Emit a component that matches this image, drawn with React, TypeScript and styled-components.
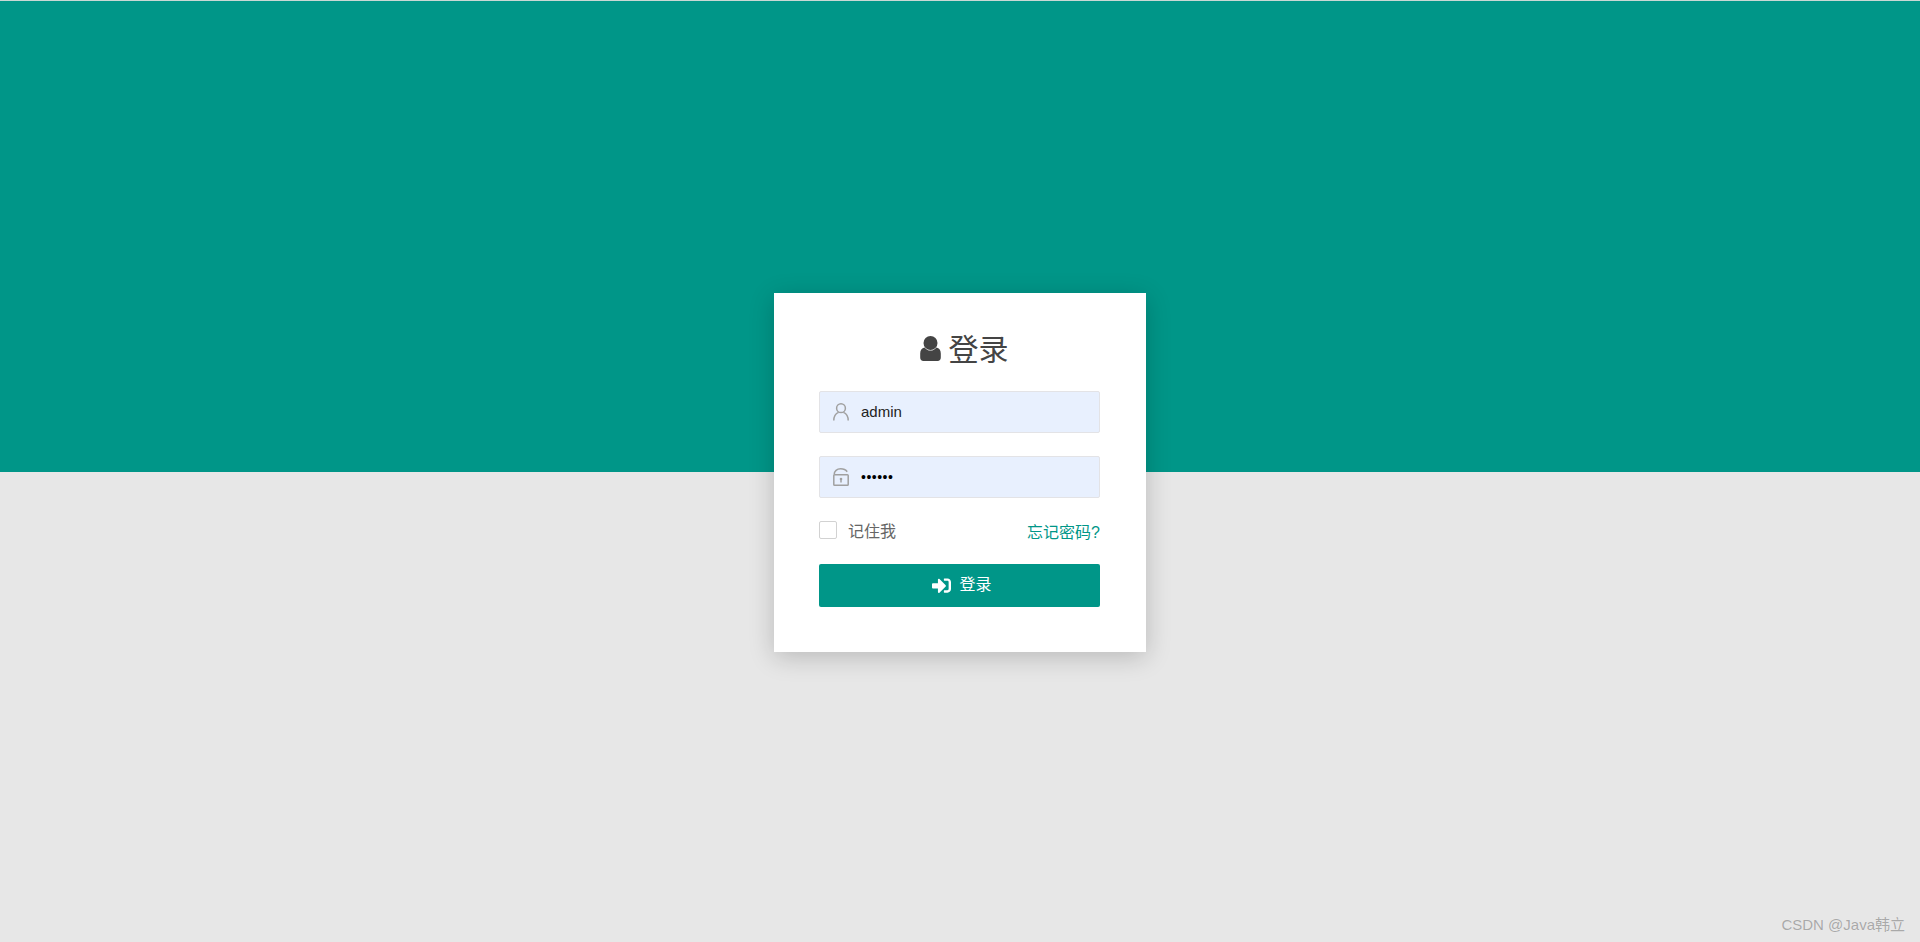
import styled, { createGlobalStyle } from "styled-components";
import { FaSignInAlt } from "react-icons/fa";

const FONT = `"Liberation Sans", "Noto Sans CJK SC", sans-serif`;

const GlobalStyle = createGlobalStyle`
  html, body {
    margin: 0;
    padding: 0;
    height: 100%;
    overflow: hidden;
  }
  body {
    font-family: ${FONT};
  }
`;

const UserGlyph = () => (
  <svg width="21" height="25" viewBox="0 0 21 25" fill="#444">
    <circle cx="10.5" cy="7" r="7" />
    <path d="M4.6 11.4C6 13.4 8 14.6 10.5 14.6C13 14.6 15 13.4 16.4 11.4C19.4 12 20.8 14 20.8 17.4V21.6C20.8 23.8 19.6 25 17.6 25H3.4C1.4 25 0.2 23.8 0.2 21.6V17.4C0.2 14 1.6 12 4.6 11.4Z" />
  </svg>
);

const PersonOutline = () => (
  <svg width="16" height="18" viewBox="0 0 16 18" fill="none" stroke="#a0a0a0" strokeWidth="1.5">
    <circle cx="8" cy="5.2" r="4.4" />
    <path d="M0.8 17.6C0.8 13.4 3 10.4 5.6 9.4M15.2 17.6C15.2 13.4 13 10.4 10.4 9.4" />
  </svg>
);

const OpenLock = () => (
  <svg width="16" height="18" viewBox="0 0 16 18" fill="none" stroke="#a0a0a0" strokeWidth="1.5">
    <path d="M1.2 6.6C1.2 3 4 0.8 7.6 0.8C10.4 0.8 12.8 1.8 14.2 3.8" />
    <rect x="0.8" y="6.8" width="14.4" height="10.4" rx="0.8" />
    <circle cx="8" cy="11" r="1.3" fill="#a0a0a0" stroke="none" />
    <path d="M8 11V14.4" />
  </svg>
);

export default function App() {
  return (
    <Page>
      <GlobalStyle />
      <TopBand />
      <BottomBand />
      <LoginCard>
        <Title>
          <TitleIcon>
            <UserGlyph />
          </TitleIcon>
          <TitleText>登录</TitleText>
        </Title>
        <Field>
          <FieldIcon>
            <PersonOutline />
          </FieldIcon>
          <FieldValue>admin</FieldValue>
        </Field>
        <Field>
          <FieldIcon>
            <OpenLock />
          </FieldIcon>
          <FieldDots>••••••</FieldDots>
        </Field>
        <OptionsRow>
          <Remember>
            <CheckBox />
            <RememberText>记住我</RememberText>
          </Remember>
          <ForgotLink>忘记密码?</ForgotLink>
        </OptionsRow>
        <SubmitButton>
          <FaSignInAlt size={19} />
          <SubmitText>登录</SubmitText>
        </SubmitButton>
      </LoginCard>
      <Watermark>CSDN @Java韩立</Watermark>
    </Page>
  );
}

const Page = styled.div`
  position: relative;
  display: flex;
  flex-direction: column;
  width: 100%;
  height: 942px;
  overflow: hidden;
`;

const TopBand = styled.div`
  height: 472px;
  flex: none;
  box-sizing: border-box;
  border-top: 1px solid #c9d8d5;
  background: #009688;
`;

const BottomBand = styled.div`
  flex: 1;
  background: #e7e7e7;
`;

const LoginCard = styled.div`
  position: absolute;
  top: 293px;
  left: 50%;
  width: 372px;
  height: 359px;
  margin-left: -186px;
  box-sizing: border-box;
  padding: 0 46px 0 45px;
  background: #fff;
  box-shadow: 0 5px 24px rgba(0, 0, 0, 0.2);
`;

const Title = styled.h2`
  display: flex;
  align-items: center;
  justify-content: center;
  gap: 8px;
  height: 98px;
  margin: 0;
  padding: 11px 0 0 9px;
  box-sizing: border-box;
  font-size: 30px;
  font-weight: 400;
  color: #444;
`;

const TitleIcon = styled.span`
  display: flex;
  margin-top: 2px;
`;

const TitleText = styled.span`
  margin-top: -2px;
`;

const Field = styled.div`
  display: flex;
  align-items: center;
  height: 42px;
  padding-left: 13px;
  box-sizing: border-box;
  background: #e8f0fe;
  border: 1px solid #e3e3e6;
  border-radius: 2px;

  & + & {
    margin-top: 23px;
  }
`;

const FieldIcon = styled.span`
  display: flex;
  width: 28px;
  flex: none;
`;

const FieldValue = styled.span`
  margin-top: -1px;
  font-size: 15px;
  color: #222;
`;

const FieldDots = styled.span`
  font-size: 14px;
  letter-spacing: 0.5px;
  color: #000;
`;

const OptionsRow = styled.div`
  display: flex;
  justify-content: space-between;
  align-items: center;
  height: 20px;
  margin-top: 22px;
`;

const Remember = styled.label`
  display: flex;
  align-items: center;
  gap: 11px;
  font-size: 16px;
  color: #666;
`;

const RememberText = styled.span`
  margin-top: -1px;
`;

const CheckBox = styled.span`
  display: block;
  width: 18px;
  height: 18px;
  box-sizing: border-box;
  background: #fff;
  border: 1px solid #d2d2d2;
  border-radius: 2px;
`;

const ForgotLink = styled.a`
  margin-top: 2px;
  font-size: 16px;
  color: #009688;
`;

const SubmitButton = styled.button`
  display: flex;
  align-items: center;
  justify-content: center;
  gap: 8px;
  width: 100%;
  height: 43px;
  margin-top: 24px;
  padding: 0 0 0 5px;
  border: none;
  border-radius: 2px;
  background: #009688;
  color: #fff;
  font-family: ${FONT};
  font-size: 16px;
`;

const SubmitText = styled.span`
  margin-top: -5px;
`;

const Watermark = styled.div`
  position: absolute;
  right: 15px;
  bottom: 8px;
  font-size: 15px;
  color: #a9a9a9;
  text-shadow: 0 0 1px rgba(255, 255, 255, 0.6);
`;
